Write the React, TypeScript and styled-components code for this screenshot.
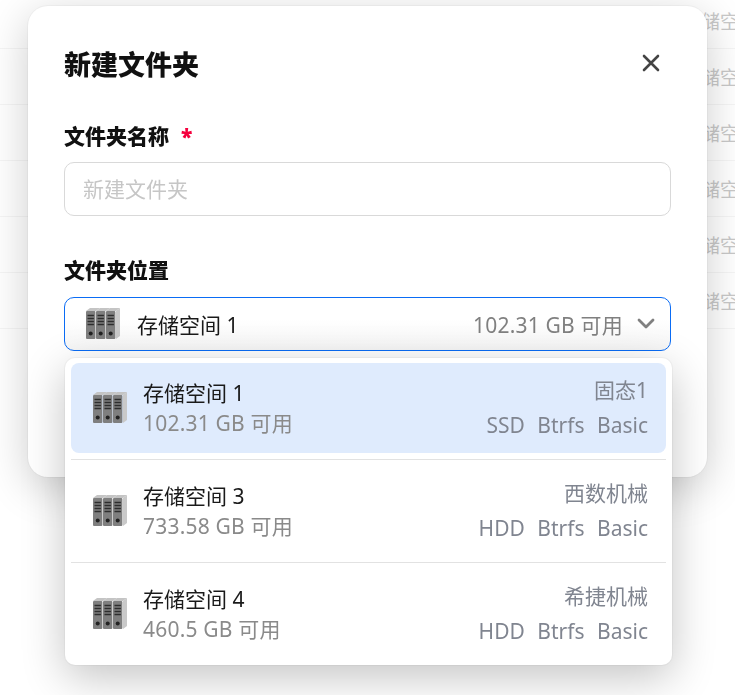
import React from "react";
import styled, { createGlobalStyle } from "styled-components";

const GlobalStyle = createGlobalStyle`
  html, body {
    margin: 0;
    height: 100%;
    overflow: hidden;
    background: #fff;
    font-family: "Noto Sans", "Noto Sans CJK SC", sans-serif;
  }
  * {
    box-sizing: border-box;
  }
`;

const ListBehind = styled.div`
  height: 695px;
  margin-top: -7px;
  overflow: hidden;
`;

const ListRow = styled.div`
  height: 56px;
  padding: 14px 0 0 682px;
  border-bottom: 1px solid #f4f4f4;
  color: #c2c2c2;
  font-size: 19px;
  line-height: 30px;
  white-space: nowrap;
  overflow: hidden;
`;

const Overlay = styled.div`
  position: fixed;
  inset: 0;
  padding: 6px 28px;
  background: rgba(255, 255, 255, 0.1);
`;

const Modal = styled.div`
  position: relative;
  width: 679px;
  height: 471px;
  padding: 36px 36px 0;
  background: #fff;
  border-radius: 20px;
  box-shadow: 0 0 0 1px rgba(0, 0, 0, 0.03), 0 10px 44px rgba(0, 0, 0, 0.2);
`;

const Header = styled.div`
  display: flex;
  align-items: center;
  justify-content: space-between;
  height: 46px;
  margin-bottom: 30px;
`;

const Title = styled.h2`
  margin: 0;
  color: #111;
  font-size: 27px;
  font-weight: 900;
  line-height: 46px;
`;

const CloseButton = styled.button`
  display: flex;
  width: 24px;
  height: 24px;
  margin: 0 8px 4px 0;
  padding: 0;
  align-items: center;
  justify-content: center;
  background: none;
  border: none;
  color: #444;
`;

const Label = styled.div`
  height: 36px;
  margin-bottom: 8px;
  color: #111;
  font-size: 21px;
  font-weight: 900;
  line-height: 36px;
`;

const LocationLabel = styled(Label)`
  margin-bottom: 9px;
`;

const Required = styled.span`
  margin-left: 12px;
  color: #f5003d;
`;

const NameInput = styled.input`
  display: block;
  width: 607px;
  height: 54px;
  margin-bottom: 36px;
  padding: 0 18px;
  border: 1px solid #d9d9d9;
  border-radius: 10px;
  outline: none;
  font: inherit;
  font-size: 21px;

  &::placeholder {
    color: #c6c6c6;
  }
`;

const Select = styled.div`
  display: flex;
  width: 607px;
  height: 54px;
  padding: 0 15px 0 19px;
  align-items: center;
  background: linear-gradient(180deg, #fff 40%, #f6f6f6 100%);
  border: 1px solid #0a6cf5;
  border-radius: 10px;
`;

const SelectName = styled.span`
  flex: 1;
  margin-left: 16px;
  color: #1a1a1a;
  font-size: 21px;
`;

const SelectFree = styled.span`
  margin-right: 14px;
  color: #808080;
  font-size: 21px;
  letter-spacing: 0.2px;
`;

const Dropdown = styled.div`
  position: absolute;
  top: 352px;
  left: 37px;
  display: flex;
  width: 607px;
  height: 307px;
  padding: 5px 6px 0;
  flex-direction: column;
  background: #fff;
  border-radius: 10px;
  box-shadow: 0 0 0 1px rgba(0, 0, 0, 0.03), 0 12px 44px rgba(0, 0, 0, 0.24);
`;

const Option = styled.div<{ $active?: boolean }>`
  display: flex;
  height: 90px;
  padding: 0 18px 0 20px;
  align-items: center;
  background: ${(p) => (p.$active ? "#dfebfd" : "transparent")};
  border-radius: 8px;
`;

const Divider = styled.div`
  height: 1px;
  margin: 6px 0;
  background: #e2e2e2;
`;

const OptionText = styled.div`
  display: flex;
  flex: 1;
  margin-left: 15px;
  flex-direction: column;
  gap: 1px;
`;

const OptionName = styled.div`
  color: #1a1a1a;
  font-size: 21px;
  line-height: 29px;
`;

const OptionFree = styled.div`
  color: #8a8a8a;
  font-size: 21px;
  line-height: 29px;
  letter-spacing: 0.2px;
`;

const OptionMeta = styled.div`
  display: flex;
  flex-direction: column;
  align-items: flex-end;
  gap: 6px;
  color: #808590;
`;

const DiskLabel = styled.div`
  font-size: 21px;
  line-height: 29px;
`;

const Tags = styled.div`
  display: flex;
  gap: 12.5px;
  font-size: 21px;
  line-height: 29px;
`;

const DiskIcon = () => (
  <svg width="37" height="34" viewBox="0 0 37 34">
    <polygon points="32,4 36,1 36,29 32,32" fill="#c9c9c9" />
    {[0, 10, 20].map((dx) => (
      <g key={dx} transform={`translate(${dx} 0)`}>
        <polygon points="2,4 6,1 16,1 12,4" fill="#c4c4c4" />
        <rect x="2" y="4" width="9.4" height="28" rx="1" fill="#7f7f7f" />
        <path d="M3.5 8.5h6.4M3.5 11.5h6.4M3.5 14.5h6.4M3.5 17.5h6.4" stroke="#2e2e2e" strokeWidth="1.3" />
        <circle cx="6.7" cy="26.5" r="2" fill="#222" />
      </g>
    ))}
  </svg>
);

const options = [
  { name: "存储空间 1", free: "102.31 GB 可用", label: "固态1", type: "SSD", active: true },
  { name: "存储空间 3", free: "733.58 GB 可用", label: "西数机械", type: "HDD" },
  { name: "存储空间 4", free: "460.5 GB 可用", label: "希捷机械", type: "HDD" },
];

export default function App() {
  return (
    <>
      <GlobalStyle />
      <ListBehind>
        {[0, 1, 2, 3, 4, 5].map((i) => (
          <ListRow key={i}>存储空间</ListRow>
        ))}
      </ListBehind>
      <Overlay>
        <Modal>
          <Header>
            <Title>新建文件夹</Title>
            <CloseButton aria-label="关闭">
              <svg width="18" height="18" viewBox="0 0 18 18">
                <path d="M2 2l14 14M16 2L2 16" stroke="currentColor" strokeWidth="2.6" strokeLinecap="round" />
              </svg>
            </CloseButton>
          </Header>
          <Label>
            文件夹名称<Required>*</Required>
          </Label>
          <NameInput placeholder="新建文件夹" />
          <LocationLabel>文件夹位置</LocationLabel>
          <Select>
            <DiskIcon />
            <SelectName>存储空间 1</SelectName>
            <SelectFree>102.31 GB 可用</SelectFree>
            <svg width="18" height="12" viewBox="0 0 18 12">
              <path d="M2 2l7 7 7-7" fill="none" stroke="#808080" strokeWidth="2.8" strokeLinecap="round" strokeLinejoin="round" />
            </svg>
          </Select>
          <Dropdown>
            {options.map((o, i) => (
              <React.Fragment key={o.name}>
                {i > 0 && <Divider />}
                <Option $active={o.active}>
                  <DiskIcon />
                  <OptionText>
                    <OptionName>{o.name}</OptionName>
                    <OptionFree>{o.free}</OptionFree>
                  </OptionText>
                  <OptionMeta>
                    <DiskLabel>{o.label}</DiskLabel>
                    <Tags>
                      <span>{o.type}</span>
                      <span>Btrfs</span>
                      <span>Basic</span>
                    </Tags>
                  </OptionMeta>
                </Option>
              </React.Fragment>
            ))}
          </Dropdown>
        </Modal>
      </Overlay>
    </>
  );
}
